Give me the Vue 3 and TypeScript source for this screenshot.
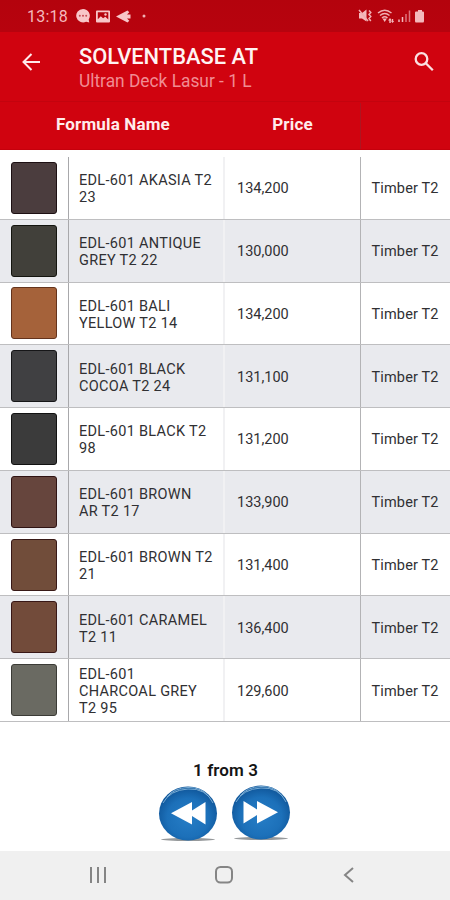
<script setup lang="ts">
interface Formula {
  lines: string[]
  price: string
  color: string
  edge: string
}

const formulas: Formula[] = [
  { lines: ['EDL-601 AKASIA T2', '23'], price: '134,200', color: '#4b3d3e', edge: '#1d1013' },
  { lines: ['EDL-601 ANTIQUE', 'GREY T2 22'], price: '130,000', color: '#41403a', edge: '#14150f' },
  { lines: ['EDL-601 BALI', 'YELLOW T2 14'], price: '134,200', color: '#a5623a', edge: '#64331c' },
  { lines: ['EDL-601 BLACK', 'COCOA T2 24'], price: '131,100', color: '#404042', edge: '#161618' },
  { lines: ['EDL-601 BLACK T2', '98'], price: '131,200', color: '#3b3b3b', edge: '#121212' },
  { lines: ['EDL-601 BROWN', 'AR T2 17'], price: '133,900', color: '#66453d', edge: '#2f1313' },
  { lines: ['EDL-601 BROWN T2', '21'], price: '131,400', color: '#714d3a', edge: '#381917' },
  { lines: ['EDL-601 CARAMEL', 'T2 11'], price: '136,400', color: '#724b3a', edge: '#381716' },
  { lines: ['EDL-601', 'CHARCOAL GREY', 'T2 95'], price: '129,600', color: '#6a6a62', edge: '#3b3b36' },
]
</script>

<template>
  <div class="screen">
    <div class="status">
      <span class="clock">13:18</span>
      <svg class="notifications" width="76" height="16" viewBox="0 0 76 16">
        <path d="M8 1a7 6.700 0 1 0 3.100 12.800l3.200.700-.600-3A6.800 6.800 0 0 0 8 1z" fill="#f8c6c8" />
        <g fill="#c74b52"><circle cx="4.800" cy="7.800" r="1" /><circle cx="8" cy="7.800" r="1" /><circle cx="11.200" cy="7.800" r="1" /></g>
        <path fill-rule="evenodd" d="M22 2.500h12q1 0 1 1v10q0 1-1 1H22q-1 0-1-1v-10q0-1 1-1zm.800 1.800v7l3-3 2.300 2 2.200-1.600 3 2.700V4.300z" fill="#f8c6c8" />
        <circle cx="30.500" cy="6.500" r="1.200" fill="#f8c6c8" />
        <path d="M41 8.500 52.500 2.500l1.800 1.800-2.300 2.200h3.500v4H52l2.300 2.200-1.800 1.800z" fill="#f8c6c8" />
        <circle cx="69" cy="8" r="1.500" fill="#eeb0b3" />
      </svg>
      <svg class="system" width="70" height="16" viewBox="0 0 70 16">
        <g fill="#f4b9bc">
          <path d="M1 5h3l4.500-3.500v12L4 10.500H1z" />
          <path d="M58 3.500h2V2h4v1.500h1q1 0 1 1V13q0 1.500-1 1.500h-7q-1 0-1-1.500V4.500q0-1 1-1z" />
          <path d="m26.700 14-2.200-3.500h4.400zM32 10l2 2.500h-1.200V15h-1.500v-2.500H30zM34.500 15l-1.500-2h1v-2h1.200v2h1z" />
        </g>
        <g fill="none" stroke="#f0aeb2" stroke-width="1.500">
          <path d="m1 2 9 11M11 2.500l1.800 2-1.800 2 1.800 2-1.800 2 1.800 2.500M20 5q6.700-5.500 13.500 0M22 7.500q4.700-4 9.500 0M24 10q2.700-2.500 5.500 0" />
        </g>
        <g stroke="#dd737b" stroke-width="1.500">
          <path d="M41 14v-2.500M44.500 14V9" stroke="#f4b9bc" /><path d="M48 14V6M51.500 14V2.500" />
        </g>
      </svg>
    </div>
    <header class="toolbar">
      <svg class="back" width="20" height="20" viewBox="0 0 20 20"><path d="M10.500 2 2.500 10l8 8M2.500 10H19" /></svg>
      <div class="titles">
        <h1><svg width="180" height="24"><text x="0" y="19.500" textLength="179" lengthAdjust="spacingAndGlyphs">SOLVENTBASE AT</text></svg></h1>
        <p><svg width="176" height="24"><text x="0" y="19" textLength="172.500" lengthAdjust="spacingAndGlyphs">Ultran Deck Lasur - 1 L</text></svg></p>
      </div>
      <svg class="search" width="22" height="22" viewBox="0 0 22 22"><circle cx="8.500" cy="8" r="5.800" /><path d="m12.800 12.300 7 7" /></svg>
    </header>
    <div class="columns">
      <span class="formula">Formula Name</span>
      <span class="price-heading">Price</span>
      <span class="last"></span>
    </div>
    <main>
      <div v-for="formula in formulas" :key="formula.lines.join(' ')" class="row">
        <div class="swatch-cell">
          <div class="swatch" :style="{ backgroundColor: formula.color, borderColor: formula.edge }"></div>
        </div>
        <div class="name"><div v-for="line in formula.lines" :key="line">{{ line }}</div></div>
        <div class="price">{{ formula.price }}</div>
        <div class="type">Timber T2</div>
      </div>
    </main>
    <footer>
      <div class="page">1 from 3</div>
      <div class="pager">
        <svg v-for="direction in ['previous', 'next']" :key="direction" :class="direction" width="60" height="60" viewBox="0 0 60 60">
          <defs>
            <radialGradient :id="direction" cx="50%" cy="58%" r="55%">
              <stop offset="0" stop-color="#267dc6" /><stop offset=".65" stop-color="#1c70b9" /><stop offset="1" stop-color="#10579b" />
            </radialGradient>
          </defs>
          <ellipse cx="30" cy="55.500" rx="27" ry="1.500" fill="#96999b" />
          <ellipse cx="30" cy="29.500" rx="29" ry="27" :fill="`url(#${direction})`" />
          <path d="M5 19Q12 6 30 5t25 14M9 13Q16 4 30 3.500T51 13" fill="none" stroke="#79acd4" stroke-width="1" />
          <path class="arrows" d="M12.500 18v22.500L26 32v8.500l21-11.200L26 18v8.500z" fill="#fff" />
        </svg>
      </div>
    </footer>
    <nav>
      <svg width="18" height="18" viewBox="0 0 18 18"><path d="M2 1v16M9 1v16M16 1v16" /></svg>
      <svg width="20" height="20" viewBox="0 0 20 20"><rect x="2" y="2" width="16" height="15.500" rx="4.500" /></svg>
      <svg width="12" height="18" viewBox="0 0 12 18"><path d="M10 2 2 9l8 7" /></svg>
    </nav>
  </div>
</template>

<style>
body { margin: 0; }
</style>

<style scoped>
* { box-sizing: border-box; }
.screen { width: 450px; height: 900px; display: flex; flex-direction: column; background: #fff; color: #303033; font-family: Roboto, sans-serif; }
.status { height: 32px; flex: none; display: flex; align-items: center; padding-left: 27px; background: linear-gradient(#b4030d, #b7030e); color: #f4b9bc; }
.clock { width: 48px; padding-top: 2px; font-size: 16px; line-height: 32px; letter-spacing: .2px; }
.system { margin-left: 207px; }
.toolbar { height: 70px; flex: none; display: flex; align-items: flex-start; background: #d0030f; border-bottom: 1px solid #c3030e; }
.back { margin: 20px 0 0 21px; fill: none; stroke: #ffe9ea; stroke-width: 2; }
.titles { width: 332px; margin: 12px 0 0 38px; }
h1, p { margin: 0; font-size: 0; }
h1 { height: 24px; }
h1 text { font-size: 21.500px; font-weight: 500; fill: #fff3f3; }
p text { font-size: 17.500px; fill: #f18c93; }
.search { margin-top: 19px; margin-left: 2px; fill: none; stroke: #fbdfe1; stroke-width: 2.300; }
.columns { height: 48px; flex: none; display: grid; grid-template-columns: 225px 135px 90px; align-items: center; background: #d0030f; color: #ffecec; font-size: 17px; font-weight: 700; text-align: center; border-bottom: 1px solid #c5000c; }
.formula { padding: 0 0 3px 1px; letter-spacing: .15px; }
.price-heading { padding-bottom: 3px; letter-spacing: .2px; }
.columns .last { height: 46px; border-left: 1px solid #ad1620; }
main { margin-top: 7px; height: 565px; flex: none; display: grid; grid-template-rows: repeat(9, 1fr); }
.row { min-height: 0; display: grid; grid-template-columns: 69px 156px 136px 89px; border-bottom: 1px solid #bebec0; font-size: 14.500px; line-height: 17px; }
.row:nth-child(even) { background: #e9eaee; }
.row > div { display: flex; justify-content: center; }
.row > .swatch-cell { align-items: center; justify-content: flex-start; padding-left: 10.500px; border-right: 1px solid #a8a8ab; }
.swatch { width: 46px; height: 52px; border: 1.500px solid; border-radius: 3px; }
.row > .name { flex-direction: column; padding-left: 10px; border-right: 2px solid #f1f1f3; padding-top: 3px; white-space: nowrap; letter-spacing: .3px; }
.row > .price { align-items: center; justify-content: flex-start; padding: 2px 0 0 12px; border-right: 1px solid #b3b3b5; }
.row > .type { align-items: center; justify-content: flex-start; padding: 2px 0 0 10.500px; letter-spacing: .15px; white-space: nowrap; }
footer { height: 129px; flex: none; padding-top: 37px; }
.page { height: 22px; text-align: center; font-size: 17px; line-height: 22px; font-weight: 600; letter-spacing: .1px; color: #151515; padding-left: 1px; }
.pager { display: flex; gap: 13px; padding-left: 158px; padding-top: 3px; }
.next { position: relative; top: -1px; }
.previous .arrows { transform: translateX(60px) scaleX(-1); }
nav { flex: 1; display: flex; align-items: center; gap: 107px; padding: 0 0 2px 89px; background: #f0f0f0; }
nav svg { fill: none; stroke: #858585; stroke-width: 2; }
nav svg:last-child { margin-left: 2px; }
</style>
